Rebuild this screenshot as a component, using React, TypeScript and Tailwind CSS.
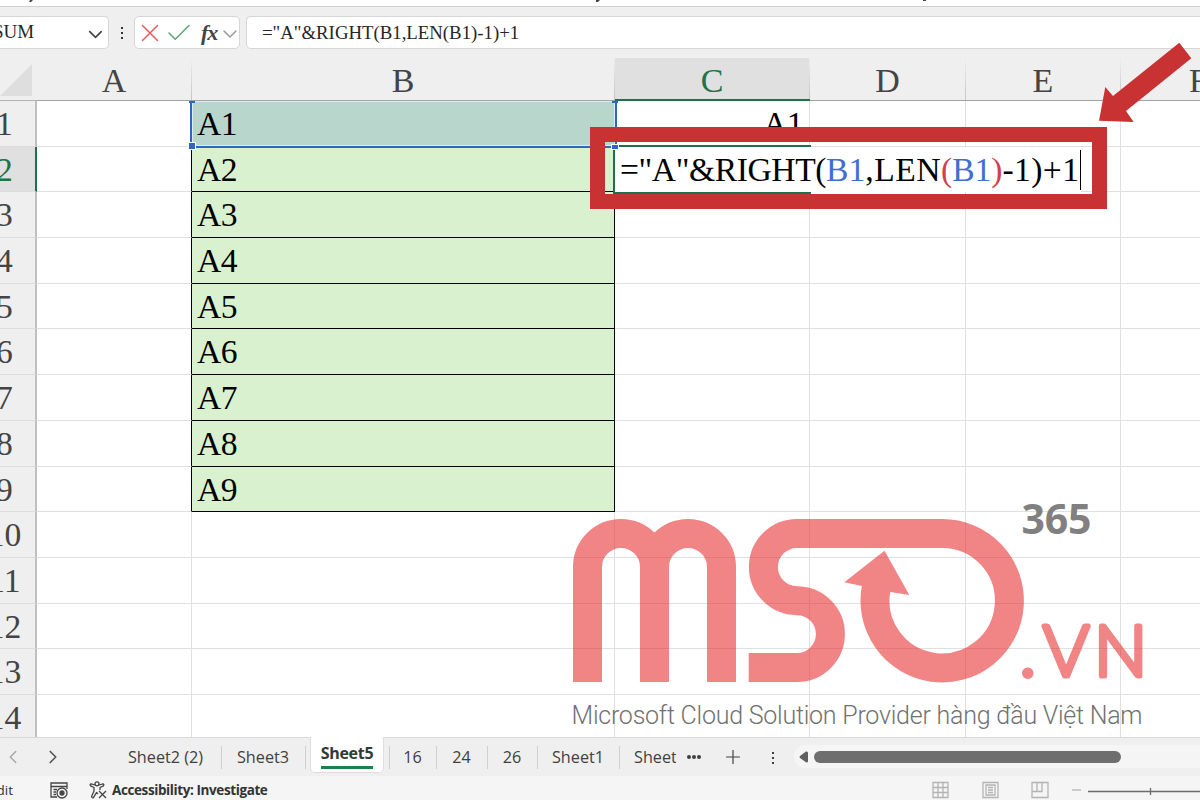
import React from 'react';
import { Check, ChevronDown, ChevronLeft, ChevronRight, Plus, X } from 'lucide-react';

const ROWS = Array.from({ length: 14 }, (_, i) => i + 1);

const COLUMNS = [
  { name: 'A', width: 'w-[155px]' },
  { name: 'B', width: 'w-[423px]' },
  { name: 'C', width: 'w-[195px]' },
  { name: 'D', width: 'w-[156px]' },
  { name: 'E', width: 'w-[155px]' },
  { name: 'F', width: 'w-[156px]' },
];

const TABS = [
  { name: 'Sheet2 (2)', width: 'w-[111px]' },
  { name: 'Sheet3', width: 'w-[84px]' },
  { name: 'Sheet5', width: 'w-[84px]', active: true },
  { name: '16', width: 'w-[47px]' },
  { name: '24', width: 'w-[51px]' },
  { name: '26', width: 'w-[50px]' },
  { name: 'Sheet1', width: 'w-[82px]' },
];

const FormulaBar: React.FC = () => (
  <div className="flex h-[51px] shrink-0 items-start bg-[#efefef] pt-[9px] font-['Liberation_Serif',serif] text-[#262626]">
    <div className="flex h-[33px] w-[109px] shrink-0 items-center justify-between rounded-r-[5px] border border-l-0 border-[#d6d6d6] bg-white pr-px">
      <span className="-ml-[7px] text-[19px]">SUM</span>
      <ChevronDown size={23} strokeWidth={1.7} className="mt-[3px] text-[#444]" />
    </div>
    <div className="flex h-[33px] w-[25px] shrink-0 flex-col items-center justify-center gap-[3px]">
      <i className="size-[2px] bg-[#333]" />
      <i className="size-[2px] bg-[#333]" />
      <i className="size-[2px] bg-[#333]" />
    </div>
    <div className="flex h-[33px] w-[106px] shrink-0 items-center rounded-[5px] border border-[#d6d6d6] bg-white">
      <X size={30} strokeWidth={1.2} className="shrink-0 text-[#ee5a5a]" />
      <Check size={30} strokeWidth={1.2} className="-ml-px shrink-0 text-[#5fa374]" />
      <span className="ml-[7px] w-[17px] shrink-0 text-[22px] leading-none font-bold italic text-[#444] tracking-[-1px]">fx</span>
      <ChevronDown size={24} strokeWidth={1.5} className="mt-[2px] shrink-0 text-[#999]" />
    </div>
    <div className="ml-[6px] flex h-[33px] flex-1 items-center rounded-l-[5px] border border-r-0 border-[#d6d6d6] bg-white pl-[15px]">
      <span className="mt-[2px] text-[18.8px] whitespace-nowrap">="A"&amp;RIGHT(B1,LEN(B1)-1)+1</span>
    </div>
  </div>
);

const ColumnHeaders: React.FC = () => (
  <div className="flex h-[43px] shrink-0 bg-[#efefef] text-[34px] text-[#444]">
    <div className="flex w-[37px] shrink-0 items-end justify-end border-b border-[#b5b5b5] pr-[5px] pb-[4px]">
      <svg width="32" height="32" viewBox="0 0 32 32">
        <path d="M32 0V32H0Z" fill="#dedede" />
      </svg>
    </div>
    {COLUMNS.map(col => (
      <div
        key={col.name}
        className={`flex shrink-0 ${col.width} ${
          col.name === 'C' ? 'border-b-2 border-[#1e7145] bg-[#e0e0e0] text-[#217346]' : 'border-b border-[#a3a3a3]'
        }`}
      >
        <span className="flex-1 text-center leading-[46px]">{col.name}</span>
        <i className="w-px bg-linear-to-b from-[#efefef] to-[#c4c4c4]" />
      </div>
    ))}
  </div>
);

const cellClass = (col: string, row: number) => {
  if (col === 'B' && row <= 9) {
    return `border-black text-black ${row === 1 ? 'bg-[#b9d6cd]' : 'bg-[#d9f1cf]'}`;
  }
  return 'border-[#e0e0e0] text-black';
};

const Grid: React.FC = () => (
  <div className="relative flex min-h-0 flex-1 flex-col overflow-hidden bg-white text-[33.6px]">
    {ROWS.map(row => (
      <div key={row} className="flex h-[45.7px] shrink-0 leading-[46px]">
        <div
          className={`w-[37px] shrink-0 border-r-2 border-b border-b-[#dcdcdc] ${
            row === 2 ? 'border-r-[#1e7145] bg-[#e0e0e0] text-[#217346]' : 'border-r-[#c0c0c0] bg-[#efefef] text-[#444]'
          }`}
        >
          <div className="flex w-[9px] justify-center">
            <span>{row}</span>
          </div>
        </div>
        {COLUMNS.map(col => (
          <div
            key={col.name}
            className={`shrink-0 border-r border-b ${col.width} ${cellClass(col.name, row)} ${
              col.name === 'A' && row <= 9 ? 'border-r-black' : ''
            }`}
          >
            {col.name === 'B' && row <= 9 && <div className="pl-[5px] tracking-[-0.5px]">A{row}</div>}
            {col.name === 'C' && row === 1 && <div className="pr-[6px] text-right tracking-[-0.5px]">A1</div>}
          </div>
        ))}
      </div>
    ))}

    {/* Referenced range outline */}
    <div className="absolute top-0 left-[190px] h-[47px] w-[427px] border-x-2 border-b-2 border-[#2f66c2]">
      <div className="h-full border border-[#dcebf5]" />
      <i className="absolute -top-px -left-[3px] h-[3px] w-[6px] bg-[#2f66c2]" />
      <i className="absolute -top-px -right-[3px] h-[3px] w-[6px] bg-[#2f66c2]" />
      <i className="absolute -bottom-[4px] -left-[4px] size-[8px] border border-white bg-[#2f66c2]" />
    </div>

    {/* Cell being edited */}
    <div className="absolute top-[44px] left-[613px] flex h-[49px] w-[198px] border-2 border-[#1e7145]">
      <div className="flex h-[45px] shrink-0 items-center bg-white pt-px pl-[5px] whitespace-nowrap text-black">
        <span className="tracking-[-0.4px]">="A"&amp;RIGHT(</span>
        <span className="text-[#3f6fd1]">B1</span>
        <span className="tracking-[0.5px]">,LEN</span>
        <span className="text-[#cf4150]">(</span>
        <span className="text-[#3f6fd1]">B1</span>
        <span className="text-[#cf4150]">)</span>
        <span className="tracking-[0.4px]">-1)+1</span>
        <i className="ml-px h-[40px] w-px bg-black" />
      </div>
      <i className="absolute -top-[3px] -left-[4px] h-[6px] w-[8px] border border-white bg-[#2f66c2]" />
    </div>
  </div>
);

const SheetTabs: React.FC = () => (
  <div className="flex h-[39px] shrink-0 border-t border-[#d9d9d9] bg-[#efefef] text-[16.2px] text-[#404040]">
    <div className="flex w-[111px] shrink-0 items-center pl-[2px]">
      <ChevronLeft size={22} strokeWidth={1.5} className="text-[#a5a5a5]" />
      <ChevronRight size={22} strokeWidth={1.8} className="ml-[18px] text-[#555]" />
    </div>
    {TABS.map(tab =>
      tab.active ? (
        <div key={tab.name} className={`flex shrink-0 ${tab.width}`}>
          <div className="-mt-px ml-[4px] flex h-[36px] w-[74px] flex-col items-center rounded-b-[5px] border border-t-0 border-[#dedede] bg-white pt-[4px] font-bold text-[#2f3b35]">
            <span className="border-b-[3px] border-[#1e7f4a] text-[16px] leading-[25px] tracking-[-0.3px]">{tab.name}</span>
          </div>
          <i className="mt-[8px] ml-auto h-[23px] w-px bg-[#cfcfcf]" />
        </div>
      ) : (
        <div key={tab.name} className={`flex shrink-0 ${tab.width}`}>
          <span className="-ml-px flex-1 text-center leading-[39px]">{tab.name}</span>
          <i className="mt-[8px] h-[23px] w-px bg-[#cfcfcf]" />
        </div>
      )
    )}
    <span className="ml-[14px] w-[42px] shrink-0 overflow-hidden leading-[39px]">Sheet2</span>
    <div className="ml-[11px] flex items-center gap-px">
      <i className="size-[4px] rounded-full bg-[#404040]" />
      <i className="size-[4px] rounded-full bg-[#404040]" />
      <i className="size-[4px] rounded-full bg-[#404040]" />
    </div>
    <Plus size={22} strokeWidth={1.3} className="mt-[8px] ml-[21px] shrink-0" />
    <div className="mt-[2px] ml-[28px] flex flex-col justify-center gap-[3px]">
      <i className="size-[2px] bg-[#404040]" />
      <i className="size-[2px] bg-[#404040]" />
      <i className="size-[2px] bg-[#404040]" />
    </div>
    <div className="mt-[7px] ml-[20px] flex h-[23px] flex-1 items-center rounded-l-full bg-[#f5f5f5]">
      <svg width="9" height="12" viewBox="0 0 9 12" className="ml-[5px]">
        <path d="M7 0.5Q9 0 9 2V10Q9 12 7 11.2L1 7Q0 6 1 5Z" fill="#5e5e5e" />
      </svg>
      <div className="ml-[6px] h-[12px] w-[307px] rounded-full bg-[#6e6e6e]" />
    </div>
  </div>
);

const StatusBar: React.FC = () => (
  <div className="flex h-[24px] shrink-0 items-center bg-[#f5f5f5] pt-[4px] text-[#333]">
    <span className="-ml-[11px] w-[61px] text-[13.5px]">Edit</span>
    <svg width="18" height="17" viewBox="0 0 18 17" fill="none" stroke="#444" strokeWidth="1.3">
      <path d="M7 15H1V1H17V7M1 4.5H17M3.5 7.5H7M3.5 10H6M3.5 12.5H6" />
      <circle cx="12" cy="11" r="5" />
      <circle cx="12" cy="11" r="2" fill="#444" />
    </svg>
    <svg width="18" height="18" viewBox="0 0 18 18" fill="none" stroke="#444" strokeWidth="1.3" className="ml-[21px]" strokeLinejoin="round">
      <circle cx="8" cy="2.8" r="2" />
      <path d="M6 4L2 2.8Q0.5 3.6 1.6 4.8L5 6.5V10L2.6 15.5Q3.2 17.6 4.6 16.4L7.5 11.5L9 13M10 4L14 2.8Q15.5 3.6 14.4 4.8L11 6.5V9" />
      <path d="M10 10L17 17M17 10L10 17" />
    </svg>
    <span className="ml-[5px] w-[600px] text-[13.5px] font-bold tracking-[-0.4px]">Accessibility: Investigate</span>
    <svg width="268" height="18" viewBox="0 0 268 18" fill="none" stroke="#b3b3b3" strokeWidth="1.3" className="ml-[220px] shrink-0">
      <path d="M1 1.5H16V16.5H1ZM1 6.5H16M1 11.5H16M6 1.5V16.5M11 1.5V16.5" />
      <path d="M51 1.5H66V16.5H51ZM54 4H63V14H54ZM56 6.5H61M56 9H61M56 11.5H61" />
      <path d="M100 1.5H116V16.5H100ZM105 1.5V10M110 1.5V10.5H100" />
      <path d="M140 9H149" />
      <path d="M156 10.5H268M218.500 7V14" stroke="#6b6b6b" />
    </svg>
  </div>
);

const Watermark: React.FC = () => (
  <svg width="600" height="250" viewBox="560 490 600 250" className="absolute top-[490px] left-[560px]">
    <g opacity="0.6" fill="none" stroke="#e83434" strokeWidth="29">
      <path d="M587.500 682V567A33.500 33.500 0 0 1 654.500 567V682M654.500 567A33.500 33.500 0 0 1 721.500 567V682" />
      <path d="M748.700 667.500H797A33.400 33.400 0 0 0 797 600.700A33.600 33.600 0 0 1 797 533.500H942.300A67.200 67.200 0 1 1 876.400 587" />
      <path d="M884.500 550.700L844.300 582.300L862 586L890.500 592L909.300 595Z" fill="#e83434" stroke="none" />
    </g>
    <g opacity="0.6">
      <text
        x="1019.500 1043 1094"
        y="676"
        fill="#e83434"
        stroke="#e83434"
        strokeWidth="5"
        strokeLinejoin="round"
        className="font-['Lato',sans-serif] text-[70.5px] font-light"
      >
        .VN
      </text>
    </g>
    <text x="1021.500" y="533.500" fill="#808080" textLength="70" className="font-['Noto_Sans',sans-serif] text-[41px] font-bold">365</text>
    <text x="571.500" y="723.500" fill="#6f7272" textLength="571" className="font-['Roboto',sans-serif] text-[25px] font-light">
      Microsoft Cloud Solution Provider hàng đầu Việt Nam
    </text>
  </svg>
);

export default function App() {
  return (
    <div className="relative flex h-[800px] w-[1200px] flex-col overflow-hidden bg-[#efefef] font-['Open_Sans','Noto_Sans',sans-serif]">
      {/* Bottom edge of the ribbon */}
      <div className="h-[7px] shrink-0 border-b border-[#cfcfcf] bg-white">
        <svg width="1200" height="3" className="block">
          <path d="M30 0H33L31 2H29ZM596 0H600L598 2H596ZM923 0H926V1H923Z" fill="#444" />
        </svg>
      </div>
      <FormulaBar />
      <div className="flex min-h-0 flex-1 flex-col font-['Liberation_Serif',serif]">
        <ColumnHeaders />
        <Grid />
      </div>
      <SheetTabs />
      <StatusBar />

      <Watermark />

      {/* Callout around the formula */}
      <div className="absolute top-[127px] left-[590px] h-[82px] w-[517px] border-[15px] border-[#c93232]" />
      <svg width="100" height="90" viewBox="1095 38 100 90" className="absolute top-[38px] left-[1095px]">
        <path d="M1179.300 42.700L1191.300 58.300L1126 111L1133.700 122L1099 120.700L1105.300 87L1113 96Z" fill="#c93232" />
      </svg>
    </div>
  );
}
